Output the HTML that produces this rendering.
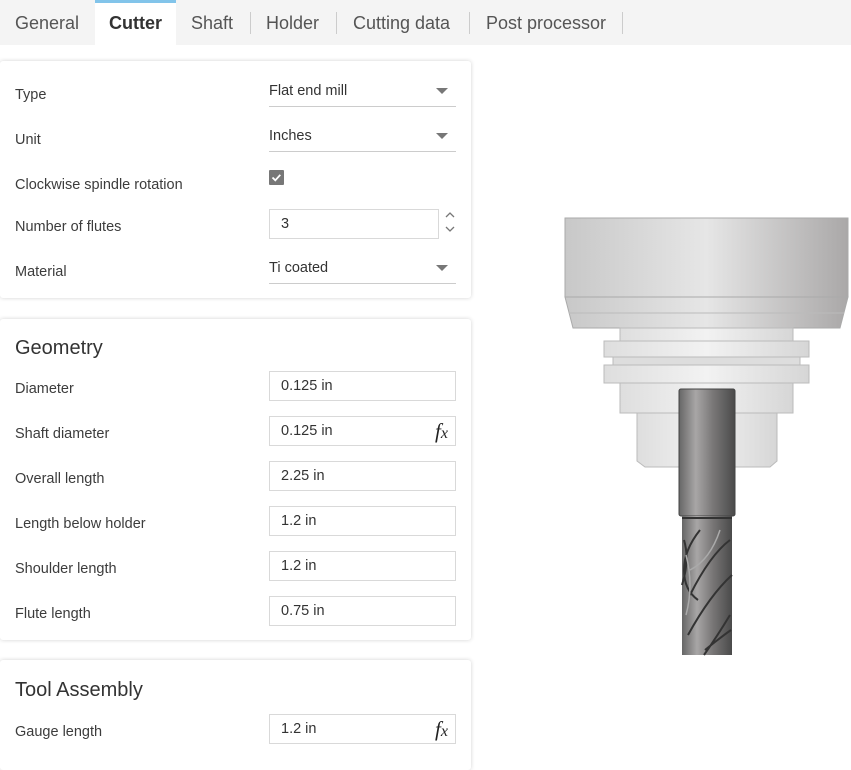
<!DOCTYPE html>
<html><head><style>
*{box-sizing:border-box;margin:0;padding:0}
body{width:851px;height:760px;overflow:hidden;background:#fff;font-family:"Liberation Sans",sans-serif;color:#3c3c3c;position:relative}
.tabs{position:absolute;left:0;top:0;width:851px;height:45px;background:#f4f4f4}
.tab{position:absolute;top:1px;height:45px;line-height:45px;font-size:18px;color:#555}
.sep{position:absolute;top:12px;width:1px;height:22px;background:#ccc}
.panel{position:absolute;left:0;width:471px;background:#fff;border-radius:3px;box-shadow:0 0 4px rgba(0,0,0,.18)}
.lbl{position:absolute;left:15px;font-size:14.5px;color:#3c3c3c}
.inp{position:absolute;left:269px;width:187px;height:30px;border:1px solid #d9d9d9;font-size:14.5px;line-height:29px;padding-left:11px;color:#333}
.sel{position:absolute;left:269px;width:187px;height:28px;border-bottom:1px solid #ccc;font-size:14.5px;line-height:24px;color:#333}
.sel:after{content:"";position:absolute;right:8px;top:9px;border-left:6px solid transparent;border-right:6px solid transparent;border-top:6px solid #777}
h2{position:absolute;left:15px;font-size:20px;font-weight:normal;color:#333}
.fx{position:absolute;right:7px;top:0;font-family:"Liberation Serif",serif;font-style:italic;font-size:21px;color:#222}
</style></head><body>
<div class="tabs">
<div class="tab" style="left:15px">General</div>
<div style="position:absolute;left:95px;top:0;width:81px;height:46px;background:#fff;border-top:3px solid #82c4ea"></div>
<div class="tab" style="left:109px;font-weight:bold;color:#333">Cutter</div>
<div class="tab" style="left:191px">Shaft</div>
<div class="sep" style="left:250px"></div>
<div class="tab" style="left:266px">Holder</div>
<div class="sep" style="left:336px"></div>
<div class="tab" style="left:353px">Cutting data</div>
<div class="sep" style="left:469px"></div>
<div class="tab" style="left:486px">Post processor</div>
<div class="sep" style="left:622px"></div>
</div>

<div class="panel" style="top:61px;height:237px"></div>
<div class="lbl" style="top:87px">Type</div>
<div class="sel" style="top:79px;padding-left:0">Flat end mill</div>
<div class="lbl" style="top:132px">Unit</div>
<div class="sel" style="top:124px">Inches</div>
<div class="lbl" style="top:177px">Clockwise spindle rotation</div>
<div style="position:absolute;left:269px;top:170px;width:15px;height:15px;background:#777;border-radius:1px"><svg width="15" height="15"><path d="M3.5 7.5l2.8 2.8 5-5.5" stroke="#fff" stroke-width="1.8" fill="none"/></svg></div>
<div class="lbl" style="top:219px">Number of flutes</div>
<div class="inp" style="top:209px;width:170px">3</div>
<svg style="position:absolute;left:443px;top:210px" width="14" height="24"><path d="M3 7l4-4 4 4M3 17l4 4 4-4" stroke="#777" stroke-width="1.3" fill="none"/></svg>
<div class="lbl" style="top:264px">Material</div>
<div class="sel" style="top:256px">Ti coated</div>

<div class="panel" style="top:319px;height:321px"></div>
<h2 style="top:337px">Geometry</h2>
<div class="lbl" style="top:381px">Diameter</div><div class="inp" style="top:371px">0.125 in</div>
<div class="lbl" style="top:426px">Shaft diameter</div><div class="inp" style="top:416px">0.125 in<span class="fx">f<span style="font-size:16px">x</span></span></div>
<div class="lbl" style="top:471px">Overall length</div><div class="inp" style="top:461px">2.25 in</div>
<div class="lbl" style="top:516px">Length below holder</div><div class="inp" style="top:506px">1.2 in</div>
<div class="lbl" style="top:561px">Shoulder length</div><div class="inp" style="top:551px">1.2 in</div>
<div class="lbl" style="top:606px">Flute length</div><div class="inp" style="top:596px">0.75 in</div>

<div class="panel" style="top:660px;height:110px"></div>
<h2 style="top:679px">Tool Assembly</h2>
<div class="lbl" style="top:724px">Gauge length</div><div class="inp" style="top:714px">1.2 in<span class="fx">f<span style="font-size:16px">x</span></span></div>

<svg style="position:absolute;left:0;top:0" width="851" height="760">
<defs>
<linearGradient id="g" x1="0" x2="1"><stop offset="0" stop-color="#c8c8c8"/><stop offset=".5" stop-color="#e6e6e6"/><stop offset="1" stop-color="#aaa8a8"/></linearGradient>
<linearGradient id="gl" x1="0" x2="1"><stop offset="0" stop-color="#dedede"/><stop offset=".5" stop-color="#f2f2f2"/><stop offset="1" stop-color="#d6d6d6"/></linearGradient>
<linearGradient id="sh" x1="0" x2="1"><stop offset="0" stop-color="#666"/><stop offset=".3" stop-color="#a8a6a6"/><stop offset=".6" stop-color="#7a7878"/><stop offset="1" stop-color="#4a4a4a"/></linearGradient>
</defs>
<rect x="565" y="218" width="283" height="79" fill="url(#g)" stroke="#aaa"/>
<path d="M565 297H848L840 328H573Z" fill="url(#g)" stroke="#aaa"/>
<line x1="569" y1="313" x2="844" y2="313" stroke="#bbb"/>
<rect x="620" y="328" width="173" height="13" fill="url(#gl)" stroke="#bbb"/>
<rect x="604" y="341" width="205" height="16" fill="url(#gl)" stroke="#bbb"/>
<rect x="613" y="357" width="187" height="8" fill="#ddd" stroke="#bbb"/>
<rect x="604" y="365" width="205" height="18" fill="url(#gl)" stroke="#bbb"/>
<rect x="620" y="383" width="173" height="30" fill="url(#gl)" stroke="#bbb"/>
<path d="M637 413H777V461L770 467H645L637 461Z" fill="url(#gl)" stroke="#bbb"/>
<rect x="679" y="389" width="56" height="127" fill="url(#sh)" stroke="#444" rx="2"/>
<rect x="682" y="516" width="50" height="139" fill="url(#sh)"/>
<line x1="682" y1="518" x2="732" y2="518" stroke="#333" stroke-width="2"/>
<path d="M684 540q6 20-2 45M700 530q-16 20-16 40t14 30M730 540q-20 15-40 55M732 575q-22 20-44 60M730 615q-12 20-26 40M705 650q12-10 26-20" stroke="#333" stroke-width="2" fill="none"/>
<path d="M686 555q8 30 0 60M720 530q-10 30-30 40" stroke="#aaa" stroke-width="1.5" fill="none"/>
</svg>
</body></html>
